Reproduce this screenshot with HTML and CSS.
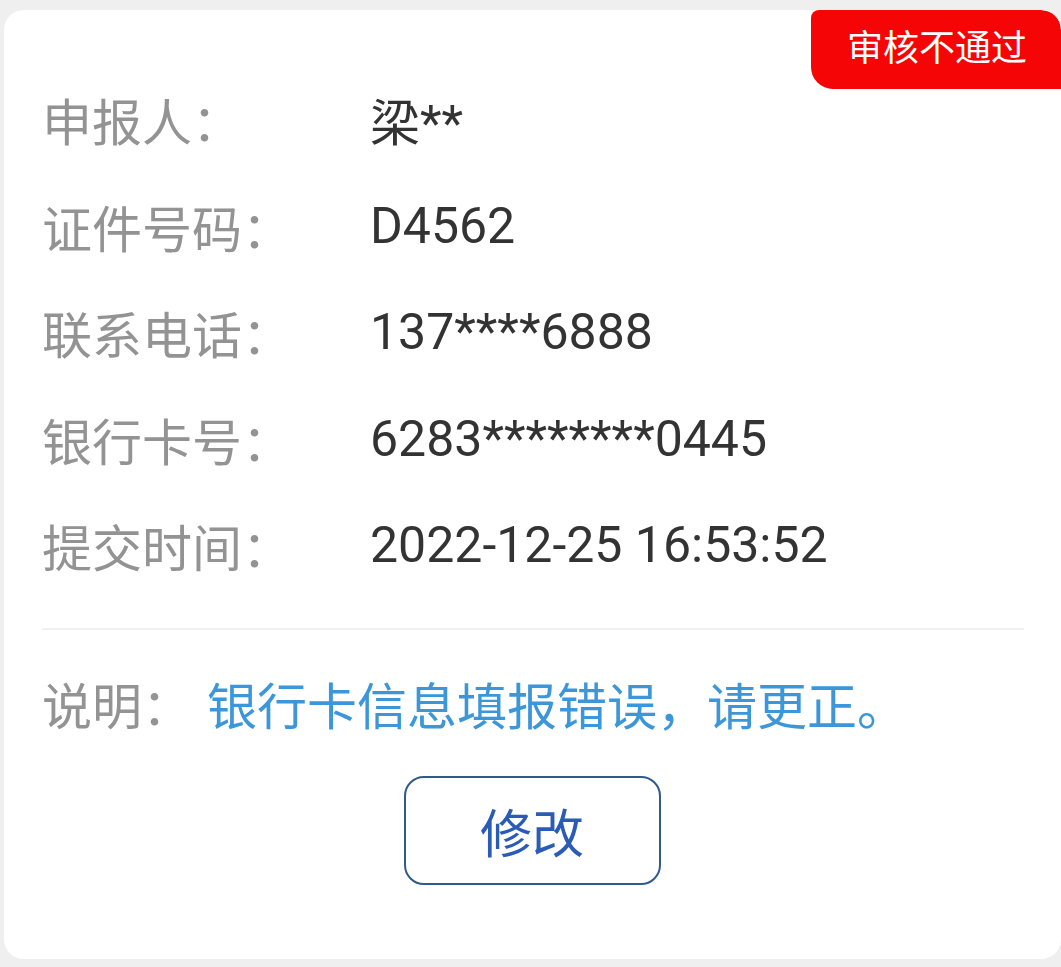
FILE: index.html
```html
<!DOCTYPE html>
<html lang="zh-CN">
<head>
<meta charset="utf-8">
<title>审核详情</title>
<link rel="stylesheet" href="styles.css">
</head>
<body>
<div class="card">
  <div class="badge">审核不通过</div>
  <div class="rows">
    <div class="row"><span class="label">申报人：</span><span class="value">梁**</span></div>
    <div class="row"><span class="label">证件号码：</span><span class="value">D4562</span></div>
    <div class="row"><span class="label">联系电话：</span><span class="value">137****6888</span></div>
    <div class="row"><span class="label">银行卡号：</span><span class="value">6283********0445</span></div>
    <div class="row"><span class="label">提交时间：</span><span class="value">2022-12-25 16:53:52</span></div>
  </div>
  <div class="divider"></div>
  <div class="note"><span class="note-label">说明：</span><span class="note-text">银行卡信息填报错误，请更正。</span></div>
  <div class="actions"><button class="btn">修改</button></div>
</div>
</body>
</html>
```
FILE: styles.css
```css
html, body {
  margin: 0;
  padding: 0;
  background: #efefef;
}
body {
  font-family: "Roboto", "Noto Sans CJK SC", sans-serif;
  padding: 10px 0 7px 4px;
}
.card {
  position: relative;
  background: #fff;
  border-radius: 20px;
  padding: 56px 37px 74px 38px;
  overflow: hidden;
}
.badge {
  position: absolute;
  top: 0;
  right: 0;
  width: 250px;
  height: 79px;
  background: #f50505;
  color: #fff;
  font-size: 36px;
  line-height: 79px;
  text-align: center;
  border-radius: 8px 20px 0 22px;
  padding-left: 2px;
  box-sizing: border-box;
}
.row {
  display: flex;
  align-items: center;
  height: 106.5px;
  font-size: 50px;
}
.label {
  color: #939393;
  width: 328px;
  flex: none;
}
.value {
  color: #333;
}
.divider {
  height: 2px;
  background: #f0f0f0;
  margin-top: 29px;
}
.note {
  display: flex;
  align-items: center;
  height: 60px;
  margin-top: 43px;
  font-size: 50px;
}
.note-label {
  color: #939393;
  width: 165px;
  flex: none;
}
.note-text {
  color: #3b97d9;
}
.actions {
  display: flex;
  justify-content: center;
  margin-top: 43px;
  padding-right: 2px;
}
.btn {
  width: 257px;
  height: 109px;
  border: 2px solid #2f5a8c;
  border-radius: 20px;
  background: #fff;
  color: #2a5bb6;
  font-family: "Noto Sans CJK SC", sans-serif;
  font-size: 52px;
  padding: 0;
}
```
